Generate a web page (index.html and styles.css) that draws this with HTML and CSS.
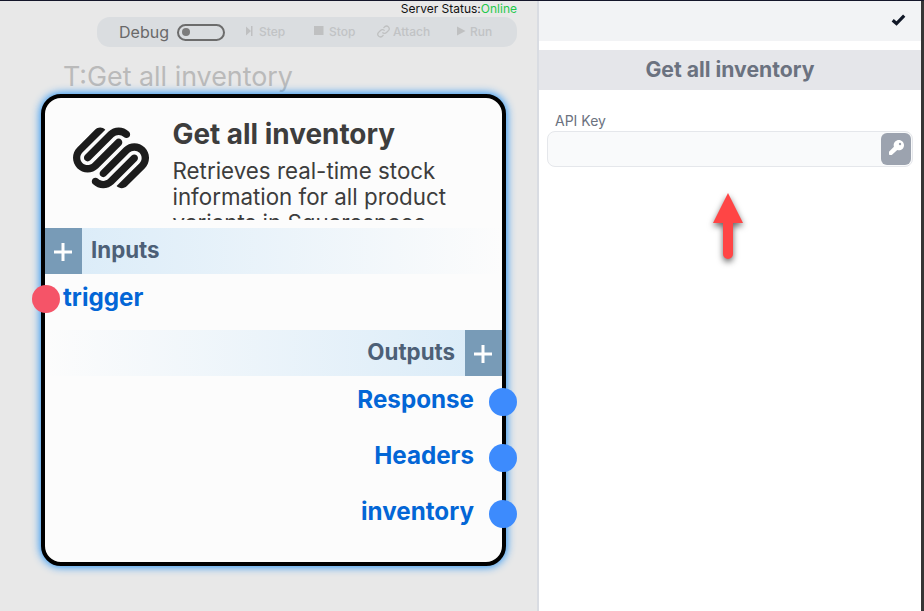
FILE: index.html
```html
<!DOCTYPE html>
<html lang="en">
<head>
<meta charset="utf-8">
<title>Get all inventory</title>
<link rel="stylesheet" href="styles.css">
</head>
<body>
<div class="app">
  <main class="canvas">
    <div class="status">Server Status:<span class="online">Online</span></div>
    <div class="toolbar">
      <span class="debug">Debug</span>
      <span class="toggle"></span>
      <span class="tool step"><svg width="8" height="10" viewBox="0 0 8 10"><path d="M0 .5 5 5 0 9.500zM5 0H6.500V10H5z"/></svg>Step</span>
      <span class="tool stop"><svg width="10" height="10" viewBox="0 0 10 10"><path d="M0 0h9.500v9H0z"/></svg>Stop</span>
      <span class="tool attach"><svg class="line" width="13" height="13" viewBox="0 0 24 24"><path d="M10 13.500a5 5 0 0 0 7.500.5l4-4a5 5 0 0 0-7-7l-2.500 2.400M14 10.500a5 5 0 0 0-7.500-.5l-4 4a5 5 0 0 0 7 7l2.500-2.400"/></svg>Attach</span>
      <span class="tool run"><svg width="9" height="10" viewBox="0 0 9 10"><path d="M0 .5 8.500 5 0 9.500z"/></svg>Run</span>
    </div>
    <div class="node-label">T:Get all inventory</div>
    <section class="node">
      <header class="node-head">
        <svg class="logo" viewBox="0 0 24 24"><path d="M22.655 8.719c-1.802-1.801-4.726-1.801-6.564 0l-7.351 7.350c-.45.45-.45 1.200 0 1.650.45.449 1.200.449 1.650 0l7.351-7.351c.899-.899 2.362-.899 3.262 0 .9.9.9 2.363 0 3.263l-7.239 7.239c.9.899 2.362.899 3.263 0l5.589-5.589c1.840-1.838 1.840-4.763.039-6.562zm-2.475 2.475c-.45-.45-1.200-.45-1.650 0l-7.351 7.389c-.899.9-2.362.9-3.263 0-.449-.45-1.200-.45-1.650 0-.45.45-.45 1.200 0 1.650 1.802 1.800 4.728 1.800 6.563 0l7.351-7.351c.449-.487.449-1.238 0-1.688zm-2.474-7.463c-1.802-1.801-4.727-1.801-6.564 0l-7.350 7.351c-.45.45-.45 1.200 0 1.650.45.45 1.200.45 1.650 0l7.351-7.351c.9-.9 2.363-.9 3.263 0 .45.45 1.200.45 1.650 0 .449-.45.449-1.200 0-1.650zm-2.475 2.475c-.45-.45-1.200-.45-1.650 0l-7.351 7.351c-.9.9-2.363.9-3.263 0s-.9-2.363 0-3.263l7.239-7.239c-.9-.9-2.363-.9-3.263 0L1.354 8.670c-1.800 1.800-1.800 4.763 0 6.563 1.801 1.800 4.726 1.800 6.563 0l7.351-7.351c.413-.45.413-1.200-.037-1.676z"/></svg>
        <div class="node-copy">
          <h1>Get all inventory</h1>
          <p>Retrieves real-time stock information for all product variants in Squarespace</p>
        </div>
      </header>
      <div class="bar inputs">
        <span class="add"><svg width="18" height="18" viewBox="0 0 18 18"><path d="M9 0v18M0 9h18"/></svg></span>
        <span>Inputs</span>
      </div>
      <div class="row in">trigger<i class="port red"></i></div>
      <div class="bar outputs">
        <span>Outputs</span>
        <span class="add"><svg width="18" height="18" viewBox="0 0 18 18"><path d="M9 0v18M0 9h18"/></svg></span>
      </div>
      <div class="row out">Response<i class="port"></i></div>
      <div class="row out">Headers<i class="port"></i></div>
      <div class="row out">inventory<i class="port"></i></div>
    </section>
  </main>
  <aside class="panel">
    <div class="panel-top">
      <svg width="15" height="12" viewBox="0 0 15 12"><path d="M1.700 6.200 5.500 9.500 13.200 1.700"/></svg>
    </div>
    <h2>Get all inventory</h2>
    <div class="field">
      <label>API Key</label>
      <div class="input">
        <button class="key"><svg width="15" height="15" viewBox="0 0 512 512"><path d="M336 352c97.200 0 176-78.800 176-176S433.200 0 336 0 160 78.800 160 176c0 18.700 2.900 36.800 8.300 53.700L7 391c-4.500 4.500-7 10.600-7 17v80c0 13.300 10.700 24 24 24h50c13.300 0 24-5 30-12l178-155c16.900 5.400 35 7 54 7zM376 96a40 40 0 1 1 0 80 40 40 0 1 1 0-80z"/></svg></button>
      </div>
    </div>
    <svg class="arrow" width="50" height="90" viewBox="0 0 50 90"><path d="M25 10 40 40H30V71a5 5 0 0 1-10 0V40H10z"/></svg>
  </aside>
</div>
</body>
</html>
```

FILE: styles.css
```css
* { box-sizing: border-box; }
body { margin: 0; font-family: Inter, "Liberation Sans", sans-serif; }
.app {
  display: flex;
  width: 924px;
  height: 611px;
  overflow: hidden;
  border-top: 1px solid #14162a;
  background: #fff;
}
.canvas {
  position: relative;
  width: 539px;
  background: #e8e8e8;
  border-right: 2px solid #d9dce2;
}
.status {
  height: 16px;
  padding-right: 20px;
  text-align: right;
  font-size: 12px;
  line-height: 16px;
  color: #111;
}
.online { color: #1fc94b; }
.toolbar {
  display: flex;
  align-items: center;
  width: 420px;
  height: 30px;
  margin-left: 97px;
  padding-left: 22px;
  border-radius: 13px;
  background: #dadde0;
}
.debug { width: 58px; margin-top: -1px; font-size: 16px; color: #696969; }
.toggle {
  width: 48px;
  height: 17px;
  padding: 2.500px 3px;
  border: 2px solid #6c6c6c;
  border-radius: 9px;
}
.toggle::before {
  content: "";
  display: block;
  width: 8px;
  height: 8px;
  border-radius: 50%;
  background: #7c7c7c;
}
.tool {
  display: flex;
  align-items: center;
  gap: 4px;
  margin-top: -1px;
  font-size: 12px;
  font-weight: 500;
  color: #c1c3c5;
}
.tool svg { margin-bottom: 1px; fill: #bfc0c1; }
.tool .line { fill: none; stroke: #bfc0c1; stroke-width: 2.400; }
.step { width: 68px; margin-left: 21px; gap: 5px; }
.stop { width: 63px; gap: 5px; }
.attach { width: 80px; gap: 3px; }
.run { gap: 4px; }
.node-label {
  position: absolute;
  left: 63px;
  top: 58px;
  font-size: 26.850px;
  line-height: 34px;
  color: #bababa;
  white-space: nowrap;
}
.node {
  position: absolute;
  left: 41px;
  top: 93px;
  width: 465px;
  height: 472px;
  border: 4px solid #000;
  border-radius: 20px;
  background: #fcfcfc;
  box-shadow: 0 0 8px 1px #2492f5;
}
.node-head {
  display: flex;
  height: 122px;
  overflow: hidden;
  padding: 18px 20px 0 28px;
}
.logo { flex: none; width: 76px; height: 76px; margin-top: 4px; fill: #1c1c1c; }
.node-copy { width: 300px; margin-left: 23.500px; color: #3d3d3d; }
h1 { margin: 0; font-size: 27.900px; line-height: 36px; white-space: nowrap; }
p { margin: 6px 0 0; font-size: 22.350px; line-height: 26px; }
.bar {
  display: flex;
  align-items: center;
  height: 46px;
  font-size: 22.300px;
  font-weight: 700;
  line-height: 44px;
  color: #4d6077;
}
.bar > span:not(.add) { height: 46px; }
.inputs { margin-top: 8px; gap: 9px; background: linear-gradient(90deg, #d9ebf8, #fcfcfc); }
.outputs { justify-content: flex-end; gap: 10px; background: linear-gradient(90deg, #fcfcfc, #d9ebf8); }
.add {
  display: grid;
  place-items: center;
  width: 37px;
  height: 46px;
  padding: 2px 1px 0 0;
  background: #789bb7;
}
.add svg { fill: none; stroke: #fff; stroke-width: 3; }
.row {
  position: relative;
  height: 56px;
  font-size: 24.200px;
  font-weight: 700;
  line-height: 47px;
  color: #0366d6;
}
.in { padding-left: 18px; }
.out { padding-right: 28px; text-align: right; }
.port {
  position: absolute;
  top: 11.500px;
  right: -15px;
  width: 28px;
  height: 28px;
  border-radius: 50%;
  background: #3d8bfd;
}
.port.red { left: -13px; top: 11px; right: auto; background: #f55468; }
.panel {
  position: relative;
  width: 385px;
  border-right: 3px solid #363636;
}
.panel-top {
  display: flex;
  justify-content: flex-end;
  height: 40px;
  padding: 13px 15px 0 0;
  background: #f2f3f5;
}
.panel-top svg { fill: none; stroke: #111827; stroke-width: 3.200; }
h2 {
  margin: 9px 0 0;
  background: #e5e6ea;
  color: #6b7280;
  font-size: 21.200px;
  font-weight: 700;
  line-height: 39px;
  height: 40px;
  text-align: center;
}
.field { padding: 21px 8px 0; }
label { display: block; padding-left: 8px; font-size: 14px; line-height: 20px; color: #6b7280; }
.input {
  display: flex;
  justify-content: flex-end;
  width: 366px;
  height: 36px;
  padding: 1px;
  border: 1px solid #e5e7eb;
  border-radius: 8px;
  background: #f9fafb;
}
.key {
  display: grid;
  place-items: center;
  width: 30px;
  height: 32px;
  padding: 0 0 3px;
  border: 0;
  border-radius: 6px;
  background: #9ca3af;
}
.key svg { fill: #fff; }
.arrow {
  position: absolute;
  left: 164px;
  top: 182px;
  fill: #ff4545;
  filter: drop-shadow(0 3px 3px rgba(0, 0, 0, .6));
}
```
